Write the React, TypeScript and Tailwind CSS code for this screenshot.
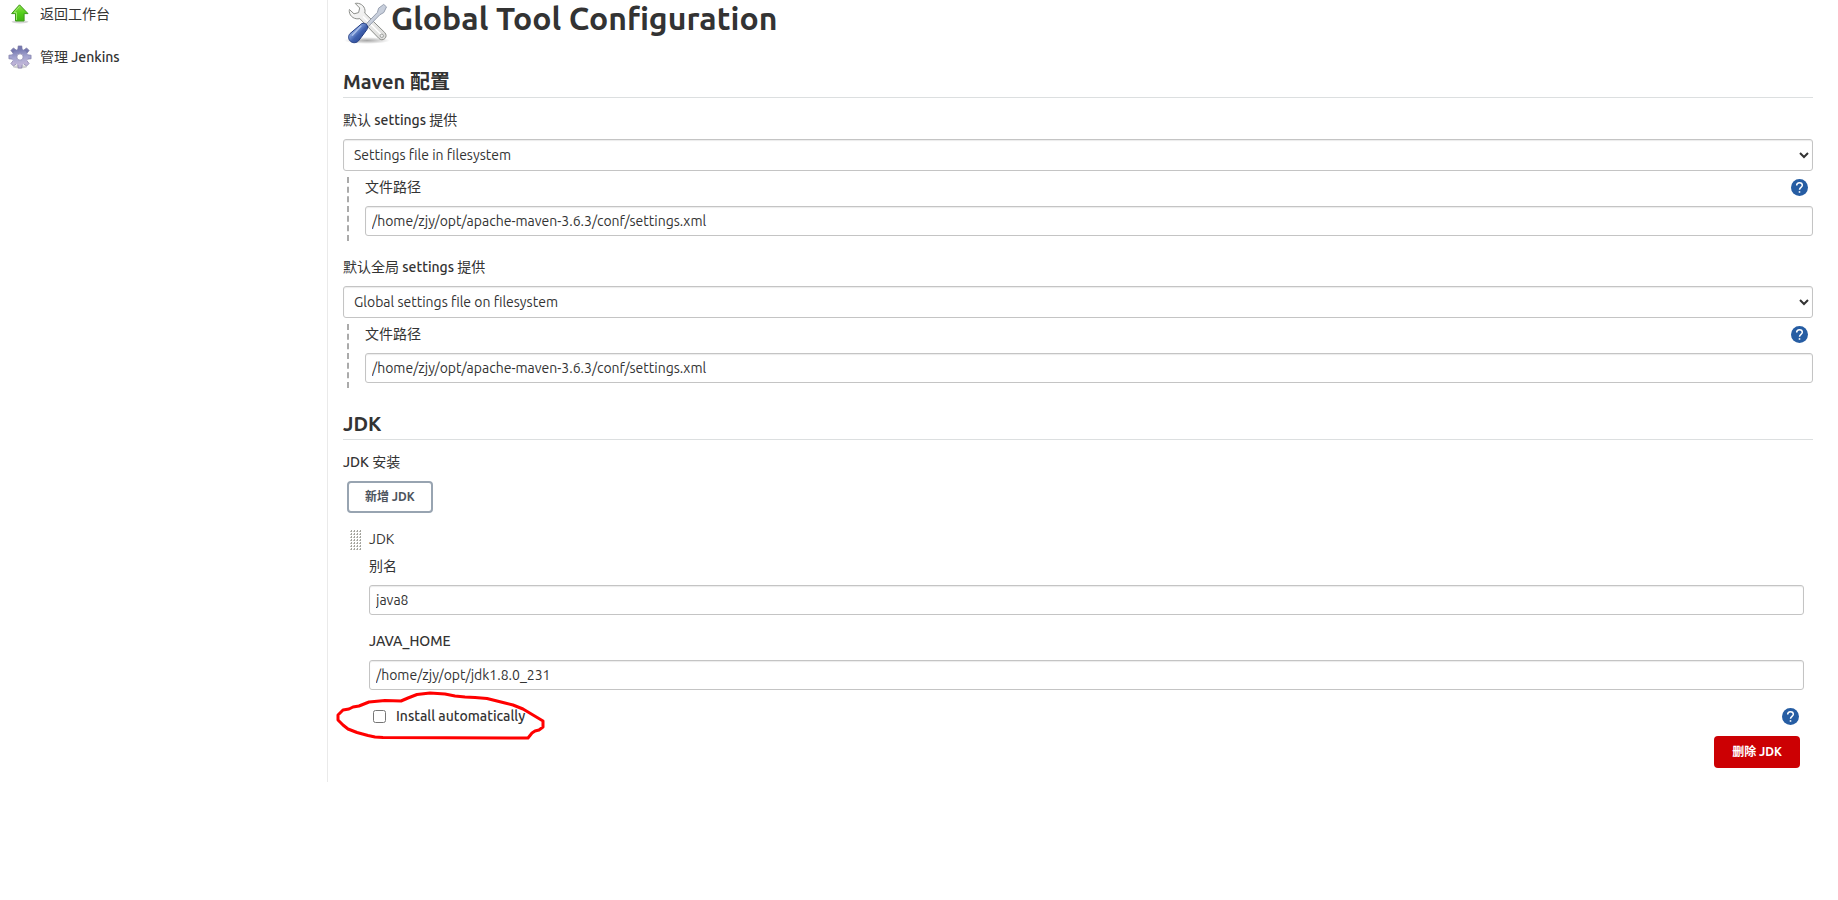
import { useId, type ReactNode } from "react";

function UpArrowIcon() {
  return (
    <svg viewBox="0 0 24 24" className="size-6 shrink-0" aria-hidden="true">
      <defs>
        <linearGradient id="arrow-fill" x1="0" y1="0" x2="0" y2="1">
          <stop offset="0" stopColor="#8ee04a" />
          <stop offset="0.5" stopColor="#55cf1c" />
          <stop offset="1" stopColor="#3fb50f" />
        </linearGradient>
      </defs>
      <ellipse cx="12" cy="19.8" rx="8.5" ry="1.6" fill="#000" opacity="0.16" />
      <path
        d="M11.5 2.800 3.600 11.600h3.900v7.400h8.600v-7.400h3.900z"
        fill="url(#arrow-fill)"
        stroke="#3f9a1c"
        strokeWidth="1"
        strokeLinejoin="round"
      />
      <path d="M11.5 4.400 6 10.600h2.500v7.400" fill="none" stroke="#b4f085" strokeWidth="0.8" />
    </svg>
  );
}

function GearIcon() {
  const teeth = [0, 45, 90, 135, 180, 225, 270, 315];
  return (
    <svg viewBox="0 0 24 24" className="size-6 shrink-0" aria-hidden="true">
      <defs>
        <linearGradient id="gear-body" gradientUnits="userSpaceOnUse" x1="10" y1="1" x2="13" y2="23">
          <stop offset="0" stopColor="#6468a4" />
          <stop offset="0.5" stopColor="#a3a4cf" />
          <stop offset="1" stopColor="#cdbedc" />
        </linearGradient>
      </defs>
      <ellipse cx="12" cy="21.8" rx="7" ry="1.7" fill="#000" opacity="0.18" />
      {teeth.map((angle) => (
        <path
          key={angle}
          d="M9.600 6 10.200 0.900h3.600L14.400 6z"
          fill={angle > 90 && angle < 270 ? "#bdb2d6" : angle === 90 || angle === 270 ? "#a3a4cf" : "#7679b0"}
          stroke="#75729f"
          strokeWidth="0.6"
          transform={`rotate(${angle} 12 12)`}
        />
      ))}
      <circle cx="12" cy="12" r="5.600" fill="none" stroke="url(#gear-body)" strokeWidth="4.800" />
      <circle cx="12" cy="12" r="3.200" fill="#fff" stroke="#7673a3" strokeWidth="0.7" />
    </svg>
  );
}

function ToolsIcon() {
  return (
    <svg viewBox="0 0 48 44" className="h-11 w-12 shrink-0" aria-hidden="true">
      <defs>
        <linearGradient id="steel" x1="0" y1="0" x2="1" y2="1">
          <stop offset="0" stopColor="#fafafa" />
          <stop offset="1" stopColor="#dcdcda" />
        </linearGradient>
        <linearGradient id="handle" x1="0" y1="0" x2="1" y2="1">
          <stop offset="0.1" stopColor="#3a5cab" />
          <stop offset="0.35" stopColor="#7f9dd9" />
          <stop offset="0.55" stopColor="#3f60ae" />
          <stop offset="1" stopColor="#1f3a80" />
        </linearGradient>
        <radialGradient id="tool-shadow">
          <stop offset="0" stopColor="#000" stopOpacity="0.35" />
          <stop offset="1" stopColor="#000" stopOpacity="0" />
        </radialGradient>
      </defs>
      <ellipse cx="24" cy="40.5" rx="23" ry="3.4" fill="url(#tool-shadow)" />
      <path
        d="M12.200 3.400c4.400-.9 9.200 2 9.800 6.800.1 1-.1 2-.2 2.900L41.600 32.400c2 2.100 1.900 4.500.2 6.200-1.800 1.700-4.300 1.500-6.100-.4L16.800 18.600c-4.900 1.200-10-1.900-10.500-6.900-.1-.8 0-1.500.1-2.200l4.600 4.300 4.600-1.200 1.100-4.600z"
        fill="url(#steel)"
        stroke="#8c8e8a"
        strokeWidth="1"
        strokeLinejoin="round"
      />
      <path d="M20 16.500 38 34.500" stroke="#fff" strokeWidth="1.500" />
      <circle cx="38.800" cy="35.800" r="1.700" fill="#eee" stroke="#999b98" strokeWidth="0.900" />
      <path
        d="M40.700 4.400 43.500 6.900 40.800 12.500 36.800 14.800 24.300 27.700 21.900 25.300 34.400 12.400 35.600 8.200z"
        fill="#c8cfdc"
        stroke="#8f97a8"
        strokeWidth="0.900"
        strokeLinejoin="round"
      />
      <path
        d="M18.800 23.600c1.600-.8 3.900-.2 4.900 1.100 1.200 1.500 1.200 3.300.2 4.900l-8.300 11.200c-1.900 2.200-5.600 2.600-8 .6-2.500-2.200-2.600-5.300-.7-7.700z"
        fill="url(#handle)"
        stroke="#223c82"
        strokeWidth="1"
      />
      <path d="M17.800 26.300 9.400 35.200" stroke="#c3d3f4" strokeWidth="1.500" strokeLinecap="round" opacity="0.700" />
    </svg>
  );
}

function HelpButton({ label }: { label: string }) {
  return (
    <button type="button" aria-label={label} className="mr-[5px] size-[17px] shrink-0 rounded-full">
      <svg viewBox="0 0 24 24" className="size-full" aria-hidden="true">
        <circle cx="12" cy="12" r="12" fill="#265da3" />
        <path d="M8 9.300C8 6.800 9.800 5.200 12 5.200s4 1.600 4 3.700c0 2.800-4 3.100-4 6.300" fill="none" stroke="#fff" strokeWidth="2.100" />
        <rect x="10.900" y="17.200" width="2.200" height="2.200" fill="#fff" />
      </svg>
    </button>
  );
}

/* Chinese runs keep the regular weight; Latin runs are medium. */
function LabelText({ text }: { text: string }) {
  return text.split(/([A-Za-z_][A-Za-z_ ]*)/).map((run, i) =>
    i % 2 ? (
      <span key={i} className="font-medium">
        {run}
      </span>
    ) : (
      run
    ),
  );
}

function SectionTitle({ children }: { children: ReactNode }) {
  return <h2 className="border-b border-[#dcdfe0] pb-[3px] text-xl leading-6 font-bold">{children}</h2>;
}

function TextField({ label, value, help }: { label: string; value: string; help?: boolean }) {
  const id = useId();
  return (
    <div>
      <div className="flex h-5 items-center justify-between">
        <label htmlFor={id}>
          <LabelText text={label} />
        </label>
        {help && <HelpButton label={`帮助:${label}`} />}
      </div>
      <input
        id={id}
        type="text"
        defaultValue={value}
        className="mt-[9px] block h-[30px] w-full rounded-[3px] border border-[#c4c4c4] bg-white px-1.5 shadow-[inset_0_1px_1px_rgba(0,0,0,0.08)]"
      />
    </div>
  );
}

function SettingsProvider({ label, option, path }: { label: string; option: string; path: string }) {
  const id = useId();
  return (
    <div>
      <label htmlFor={id} className="block">
        <LabelText text={label} />
      </label>
      <select
        id={id}
        className="mt-[9px] block h-8 w-full rounded-[3px] border border-[#c4c4c4] bg-white px-1.5 shadow-[inset_0_1px_1px_rgba(0,0,0,0.08)]"
      >
        <option>{option}</option>
      </select>
      <div className="mt-1.5 ml-1 border-l-2 border-dashed border-[#aaa] pb-[5px] pl-4">
        <TextField label="文件路径" value={path} help />
      </div>
    </div>
  );
}

function DragHandle() {
  const dots = Array.from({ length: 28 }, (_, i) => [(i % 4) * 3, Math.floor(i / 4) * 3]);
  return (
    <svg viewBox="0 0 12 21" className="mt-px h-[21px] w-3 shrink-0 cursor-move" aria-hidden="true">
      {dots.map(([x, y]) => (
        <g key={`${x}-${y}`}>
          <rect x={x} y={y + 1} width="2" height="1" fill="#c2c2bc" />
          <rect x={x + 1} y={y} width="1" height="2" fill="#a3a39d" />
        </g>
      ))}
    </svg>
  );
}

function RedCircle() {
  return (
    <svg
      viewBox="0 0 212 52"
      className="pointer-events-none absolute -top-4 -left-[34px] h-[52px] w-[212px]"
      aria-hidden="true"
    >
      <path
        d="M3 25 8 20 14 19 18 17 24 16 34 12 50 10.500 66 11 73 8 82 4.500 95 3 110 4 120 6 130 7 140 7.500 152 8.500 160 10.500 170 13 178 15 188 19 198 25 208 31 208 37 204 40 200 41 197 43 193 48 48 47.500 40 47 33 45.500 22 42.500 13 39 8 35 3 30z"
        fill="none"
        stroke="#f00"
        strokeWidth="3"
        strokeLinejoin="round"
      />
    </svg>
  );
}

export default function App() {
  return (
    <div className="flex items-start bg-white font-['Ubuntu','Noto_Sans','Noto_Sans_CJK_SC',sans-serif] text-sm leading-5 text-[#333]">
      <nav className="w-[327px] shrink-0 pt-0.5 pl-2">
        <ul className="flex flex-col gap-[19px]">
          <li>
            <a href="#dashboard" className="flex h-6 items-center gap-2">
              <UpArrowIcon />
              <LabelText text="返回工作台" />
            </a>
          </li>
          <li>
            <a href="#manage" className="flex h-6 items-center gap-2">
              <GearIcon />
              <span>
                <LabelText text="管理 Jenkins" />
              </span>
            </a>
          </li>
        </ul>
      </nav>

      <main className="min-w-0 flex-1 border-l border-[#eaeaea] pr-[25px] pb-3.5 pl-[15px]">
        <h1 className="mb-[26px] flex h-11 items-start text-[32px] leading-9 font-bold">
          <ToolsIcon />
          Global Tool Configuration
        </h1>

        <section>
          <SectionTitle>Maven 配置</SectionTitle>
          <div className="mt-3 flex flex-col gap-4">
            <SettingsProvider
              label="默认 settings 提供"
              option="Settings file in filesystem"
              path="/home/zjy/opt/apache-maven-3.6.3/conf/settings.xml"
            />
            <SettingsProvider
              label="默认全局 settings 提供"
              option="Global settings file on filesystem"
              path="/home/zjy/opt/apache-maven-3.6.3/conf/settings.xml"
            />
          </div>
        </section>

        <section className="mt-6">
          <SectionTitle>JDK</SectionTitle>
          <h3 className="mt-3">
            <LabelText text="JDK 安装" />
          </h3>
          <button
            type="button"
            className="mt-[9px] ml-1 block h-8 rounded-[4px] border-2 border-[#98a4b1] px-4 text-xs leading-4 font-bold text-[#4d545d]"
          >
            新增 JDK
          </button>

          <div className="mt-4 mr-[9px] ml-[7px] flex gap-[7px]">
            <DragHandle />
            <div className="min-w-0 flex-1">
              <div className="mb-[7px]">JDK</div>
              <div className="flex flex-col gap-4">
                <TextField label="别名" value="java8" />
                <TextField label="JAVA_HOME" value="/home/zjy/opt/jdk1.8.0_231" />
                <div className="relative flex h-5 items-center justify-between">
                  <label className="flex items-center gap-2.5 pl-1 font-medium">
                    <input type="checkbox" className="size-[13px]" />
                    Install automatically
                  </label>
                  <HelpButton label="帮助:Install automatically" />
                  <RedCircle />
                </div>
              </div>
              <div className="mt-2.5 mr-1 flex justify-end">
                <button
                  type="button"
                  className="h-8 rounded-[4px] bg-[#cc0003] px-[18px] text-xs leading-4 font-bold text-white"
                >
                  删除 JDK
                </button>
              </div>
            </div>
          </div>
        </section>
      </main>
    </div>
  );
}
